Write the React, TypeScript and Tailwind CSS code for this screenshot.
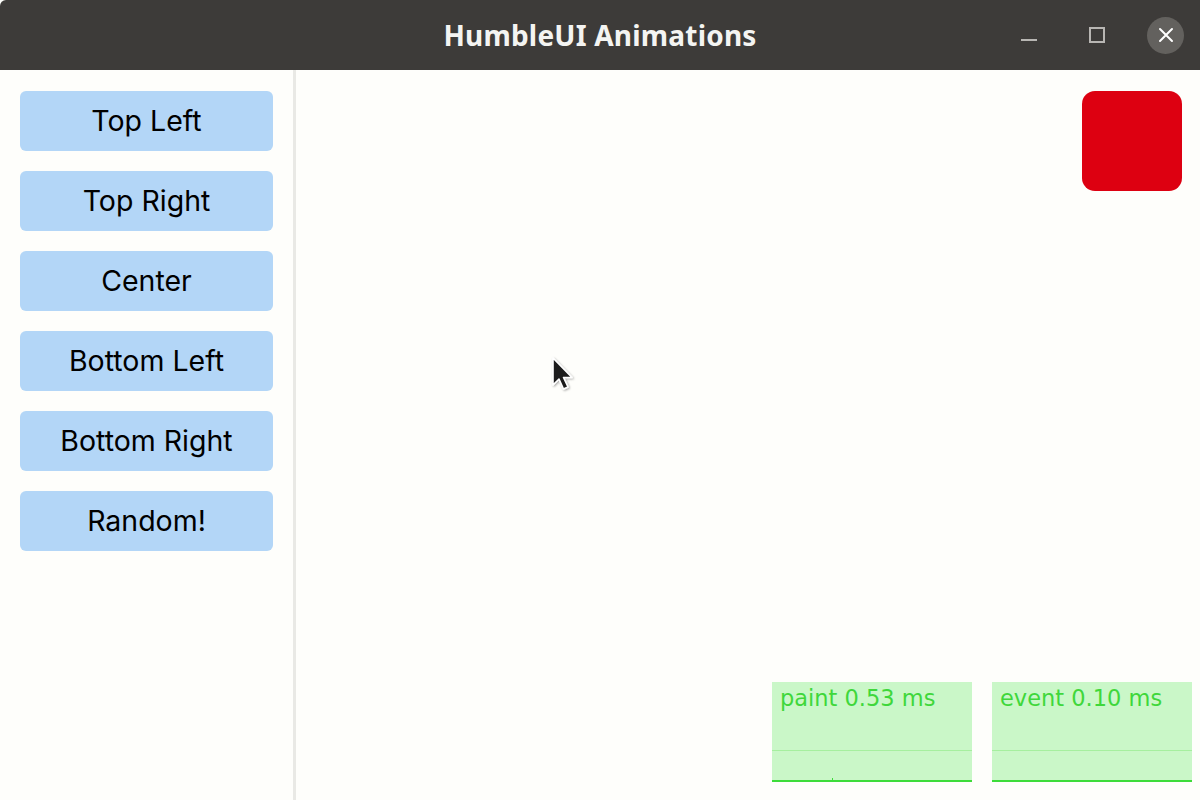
import React from "react";

const buttons = ["Top Left", "Top Right", "Center", "Bottom Left", "Bottom Right", "Random!"];

function Stat({ label, tick }: { label: string; tick?: boolean }) {
  return (
    <div className="relative w-[200px] h-[100px] bg-[#caf7c8] flex flex-col">
      <div className="px-2 pt-[2px] text-[22.5px] leading-[28px] text-[#3fd73b]" style={{ fontFamily: '"DejaVu Sans", sans-serif' }}>
        {label}
      </div>
      <div className="flex-1" />
      <div className="h-px bg-[#a6ef9f]" />
      <div className="h-[29px]" />
      <div className="h-[2px] bg-[#3ddc3a]" />
      {tick && <div className="absolute left-[60px] bottom-[2px] w-px h-[2px] bg-[#3ddc3a]" />}
    </div>
  );
}

export default function App() {
  return (
    <div className="w-[1200px] h-[800px] flex flex-col overflow-hidden bg-[#fefefb] relative" style={{ fontFamily: 'Inter, "Noto Sans", sans-serif' }}>
      <div className="h-[70px] bg-[#3d3b39] relative flex items-center justify-center rounded-tl-[6px]">
        <div className="text-[#f4f4f2] text-[28px] font-bold tracking-[0.2px]" style={{ fontFamily: '"Noto Sans", "DejaVu Sans", sans-serif' }}>
          HumbleUI Animations
        </div>
        <div className="absolute right-[16px] top-0 h-[70px] flex items-center">
          <div className="w-[36px] flex justify-center">
            <div className="w-[16px] h-[2px] bg-[#b8b6b3] mt-[10px]" />
          </div>
          <div className="w-[32px]" />
          <div className="w-[36px] flex justify-center">
            <div className="w-[16px] h-[16px] border-2 border-[#b8b6b3]" />
          </div>
          <div className="w-[32px]" />
          <div className="w-[37px] h-[37px] rounded-full bg-[#63615e] flex items-center justify-center">
            <svg width="16" height="16" viewBox="0 0 16 16">
              <path d="M2 2 L14 14 M14 2 L2 14" stroke="#ffffff" strokeWidth="2" strokeLinecap="round" />
            </svg>
          </div>
        </div>
      </div>
      <div className="flex-1 flex">
        <div className="w-[293px] pt-[21px] px-5 flex flex-col gap-5">
          {buttons.map((b) => (
            <div key={b} className="h-[60px] rounded-[6px] bg-[#b3d6f7] flex items-center justify-center text-[28.5px] font-normal text-black">
              {b}
            </div>
          ))}
        </div>
        <div className="w-[3px] bg-[#e9e9e5]" />
        <div className="flex-1 relative">
          <div className="absolute right-[18px] top-[21px] w-[100px] h-[100px] rounded-[13px] bg-[#dd0011]" />
          <div className="absolute right-[8px] bottom-[18px] flex gap-5">
            <Stat label="paint 0.53 ms" tick />
            <Stat label="event 0.10 ms" />
          </div>
          <svg className="absolute left-[253px] top-[286px]" width="28" height="40" viewBox="0 0 28 40">
            <defs>
              <filter id="sh" x="-50%" y="-50%" width="200%" height="200%">
                <feDropShadow dx="1" dy="1" stdDeviation="1.2" floodColor="#000" floodOpacity="0.35" />
              </filter>
            </defs>
            <path d="M4 2 L4 29 L10 23 L14.5 33 L19 31 L14.5 21.5 L23 21.5 Z" fill="#1c1c1c" stroke="#ffffff" strokeWidth="1.6" strokeLinejoin="round" filter="url(#sh)" />
          </svg>
        </div>
      </div>
    </div>
  );
}
